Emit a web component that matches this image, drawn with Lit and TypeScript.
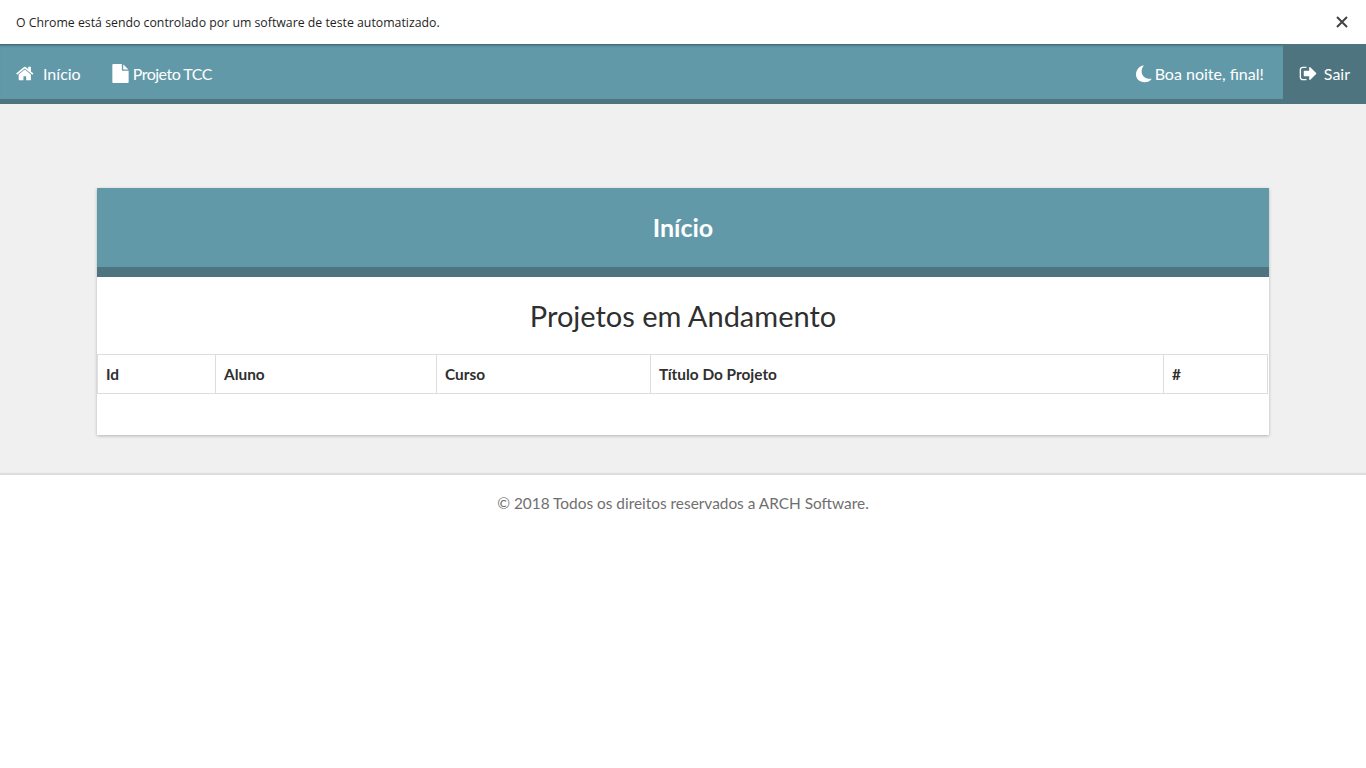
import { LitElement, css, html, svg } from 'lit';
import { customElement } from 'lit/decorators.js';

const ICONS = {
  home: 'M1408 992v480q0 26-19 45t-45 19h-384v-384h-256v384h-384q-26 0-45-19t-19-45v-480q0-1 .5-3t.5-3l575-474 575 474q1 2 1 6zm223-69l-62 74q-8 9-21 11h-3q-13 0-21-7l-692-577-692 577q-12 8-24 7-13-2-21-11l-62-74q-8-10-7-23.5t11-21.5l719-599q32-26 76-26t76 26l244 204v-195q0-14 9-23t23-9h192q14 0 23 9t9 23v408l219 182q10 8 11 21.5t-7 23.5z',
  file: 'M1152 512v-472q22 14 36 28l408 408q14 14 28 36h-472zm-128 32q0 40 28 68t68 28h544v1056q0 40-28 68t-68 28h-1344q-40 0-68-28t-28-68v-1600q0-40 28-68t68-28h800v544z',
  moon: 'M750 120C300 180 0 560 0 1000C0 1430 350 1720 800 1720C1090 1720 1340 1600 1490 1380C920 1480 530 1130 530 700C530 500 610 280 750 120z',
  signOut: 'M704 1440q0 4 1 20t.5 26.5-3 23.5-10 19.5-20.5 6.5h-320q-119 0-203.5-84.5t-84.5-203.5v-704q0-119 84.5-203.5t203.5-84.5h320q13 0 22.5 9.5t9.5 22.5q0 4 1 20t.5 26.5-3 23.5-10 19.5-20.5 6.5h-320q-66 0-113 47t-47 113v704q0 66 47 113t113 47h312l11.5 1 11.5 3 8 5.5 7 9 2 13.5zm928-544q0 26-19 45l-544 544q-19 19-45 19t-45-19-19-45v-288h-448q-26 0-45-19t-19-45v-384q0-26 19-45t45-19h448v-288q0-26 19-45t45-19 45 19l544 544q19 19 19 45z',
};

const icon = (d: string) => html`<svg class="icon" viewBox="0 0 1792 1792" aria-hidden="true">${svg`<path fill="currentColor" d=${d}></path>`}</svg>`;

const COLUMNS = [
  { label: 'Id', width: 118 },
  { label: 'Aluno', width: 221 },
  { label: 'Curso', width: 214 },
  { label: 'Título Do Projeto', width: 513 },
  { label: '#', width: 104 },
];

@customElement('app-root')
export class AppRoot extends LitElement {
  static styles = css`
    :host {
      display: block;
      min-height: 768px;
      background: #fff;
      color: #2f2f2f;
      font-family: Lato, "Noto Sans", sans-serif;
      font-size: 16px;
    }
    .infobar {
      display: flex;
      align-items: center;
      justify-content: space-between;
      height: 44px;
      padding: 0 16px;
      box-sizing: border-box;
      background: #fff;
      color: #1f1f1f;
      font-family: "Open Sans", sans-serif;
      font-size: 12.3px;
    }
    .close { width: 12px; height: 12px; margin-right: 2px; color: #444; }
    .nav {
      display: flex;
      justify-content: space-between;
      height: 60px;
      box-sizing: border-box;
      background: #6299a9;
      border-bottom: 5px solid #4e7480;
      box-shadow: inset 0 3px 3px -2px rgba(40, 70, 80, 0.8);
      color: #fff;
    }
    .group { display: flex; }
    .link { display: flex; align-items: center; gap: 8px; padding: 3px 15px 0 16px; }
    .icon { width: 19px; height: 19px; flex: none; }
    .start { padding-right: 14px; }
    .doc { gap: 3px; letter-spacing: -0.5px; }
    .greeting { gap: 0; padding-right: 19px; }
    .exit { background: #4e7480; height: 60px; box-sizing: border-box; padding: 0 16px 2px; gap: 6px; }
    .content { background: #f0f0f0; padding: 84px 97px 39px; }
    .card { background: #fff; box-shadow: 0 1px 3px rgba(0, 0, 0, 0.25); padding-bottom: 41px; }
    .card-head {
      height: 89px;
      box-sizing: border-box;
      display: flex;
      align-items: center;
      justify-content: center;
      padding-bottom: 1px;
      background: #6299a9;
      border-bottom: 10px solid #4e7480;
      color: #fff;
      font-size: 25px;
      font-weight: 700;
    }
    h2 { margin: 0; height: 77px; line-height: 78px; text-align: center; font-size: 29px; font-weight: 400; }
    table { border-collapse: collapse; table-layout: fixed; width: 1170px; }
    th {
      height: 39px;
      padding: 0 8px;
      box-sizing: border-box;
      border: 1px solid #ddd;
      text-align: left;
      font-weight: 700;
      font-size: 15.4px;
    }
    .footer {
      border-top: 1px solid #ddd;
      box-shadow: 0 -1px 1px rgba(0, 0, 0, 0.08);
      text-align: center;
      padding-top: 19px;
      color: #6f6f6f;
      font-size: 15.4px;
    }
  `;

  render() {
    return html`
      <div class="infobar">
        <span>O Chrome está sendo controlado por um software de teste automatizado.</span>
        <svg class="close" viewBox="0 0 12 12"><path d="M1 1l10 10M11 1L1 11" stroke="currentColor" stroke-width="2"></path></svg>
      </div>
      <nav class="nav">
        <div class="group">
          <span class="link start">${icon(ICONS.home)}Início</span>
          <span class="link doc">${icon(ICONS.file)}Projeto TCC</span>
        </div>
        <div class="group">
          <span class="link greeting">${icon(ICONS.moon)}Boa noite, final!</span>
          <span class="link exit">${icon(ICONS.signOut)}Sair</span>
        </div>
      </nav>
      <main class="content">
        <section class="card">
          <div class="card-head">Início</div>
          <h2>Projetos em Andamento</h2>
          <table>
            <colgroup>${COLUMNS.map((c) => html`<col style="width:${c.width}px" />`)}</colgroup>
            <thead><tr>${COLUMNS.map((c) => html`<th>${c.label}</th>`)}</tr></thead>
          </table>
        </section>
      </main>
      <footer class="footer">© 2018 Todos os direitos reservados a ARCH Software.</footer>
    `;
  }
}
